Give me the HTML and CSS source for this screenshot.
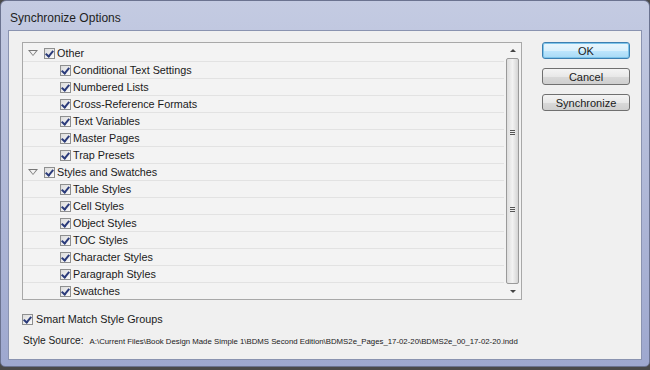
FILE: index.html
```html
<!DOCTYPE html>
<html lang="en">
<head>
<meta charset="UTF-8">
<title>Synchronize Options</title>
<link rel="stylesheet" href="styles.css">
</head>
<body>
<div class="window">
    <div class="titlebar">Synchronize Options</div>
    <div class="client">
        <div class="main">
            <div class="listbox">
                <div class="rows">
                    <div class="row group"><span class="twist"></span><span class="cb"></span>Other</div>
                    <div class="row"><span class="cb"></span>Conditional Text Settings</div>
                    <div class="row"><span class="cb"></span>Numbered Lists</div>
                    <div class="row"><span class="cb"></span>Cross-Reference Formats</div>
                    <div class="row"><span class="cb"></span>Text Variables</div>
                    <div class="row"><span class="cb"></span>Master Pages</div>
                    <div class="row"><span class="cb"></span>Trap Presets</div>
                    <div class="row group"><span class="twist"></span><span class="cb"></span>Styles and Swatches</div>
                    <div class="row"><span class="cb"></span>Table Styles</div>
                    <div class="row"><span class="cb"></span>Cell Styles</div>
                    <div class="row"><span class="cb"></span>Object Styles</div>
                    <div class="row"><span class="cb"></span>TOC Styles</div>
                    <div class="row"><span class="cb"></span>Character Styles</div>
                    <div class="row"><span class="cb"></span>Paragraph Styles</div>
                    <div class="row last"><span class="cb"></span>Swatches</div>
                </div>
                <div class="scrollbar">
                    <span class="arrow up"></span>
                    <div class="thumb">
                        <span class="grip"></span>
                        <span class="grip"></span>
                    </div>
                    <span class="arrow down"></span>
                </div>
            </div>
            <div class="option"><span class="cb"></span>Smart Match Style Groups</div>
            <div class="source">
                <span class="label">Style Source:</span>
                <span class="path">A:\Current Files\Book Design Made Simple 1\BDMS Second Edition\BDMS2e_Pages_17-02-20\BDMS2e_00_17-02-20.indd</span>
            </div>
        </div>
        <div class="buttons">
            <button class="btn default">OK</button>
            <button class="btn">Cancel</button>
            <button class="btn">Synchronize</button>
        </div>
    </div>
</div>
</body>
</html>
```

FILE: styles.css
```css
body {
    margin: 0;
    background-color: #4a4a4a;
    font-family: "Liberation Sans", Arial, sans-serif;
    color: #1a1a1a;
}
.window {
    width: 650px;
    height: 367px;
    box-sizing: border-box;
    padding: 0 7px 6px 7px;
    background: linear-gradient(to bottom, #c4cbe2 0%, #b4bcd9 40%, #9ea8cf 100%);
    border: 1px solid #6b7390;
    border-radius: 6px 6px 5px 5px;
    display: flex;
    flex-direction: column;
}
.titlebar {
    height: 29px;
    line-height: 34px;
    padding-left: 2px;
    font-size: 12px;
    color: #1e1e1e;
}
.client {
    flex: 1;
    background-color: #f0f0f0;
    border: 1px solid #8a93b0;
    display: flex;
    padding: 11px 13px 0 13px;
}
.main {
    flex: 0 0 500px;
    min-width: 0;
}
.listbox {
    height: 256px;
    border: 1px solid #a8a8a8;
    background-color: #f3f3f3;
    display: flex;
}
.rows {
    flex: 1;
    padding-top: 2px;
}
.row {
    height: 16px;
    border-bottom: 1px solid #e2e2e2;
    display: flex;
    align-items: center;
    padding-left: 37px;
    font-size: 10.8px;
}
.row.last {
    border-bottom: none;
}
.row.group {
    padding-left: 5px;
}
.twist {
    width: 0;
    height: 0;
    border-left: 5px solid transparent;
    border-right: 5px solid transparent;
    border-top: 6px solid #777;
    margin-right: 6px;
    position: relative;
}
.twist::after {
    content: '';
    position: absolute;
    left: -3px;
    top: -5px;
    border-left: 3px solid transparent;
    border-right: 3px solid transparent;
    border-top: 4px solid #f3f3f3;
}
.cb {
    width: 9px;
    height: 9px;
    border: 1px solid #8e8f8f;
    background: linear-gradient(135deg, #dcdcdc, #fafafa);
    margin-right: 2px;
    position: relative;
    flex-shrink: 0;
}
.cb::after {
    content: '';
    position: absolute;
    left: 2px;
    top: 0px;
    width: 3px;
    height: 6px;
    border-right: 2px solid #2b3b7a;
    border-bottom: 2px solid #2b3b7a;
    transform: rotate(40deg);
}
.scrollbar {
    width: 17px;
    display: flex;
    flex-direction: column;
    align-items: center;
    background-color: #f3f3f3;
}
.arrow {
    height: 15px;
    display: flex;
    align-items: center;
}
.arrow::before {
    content: '';
    border-left: 3px solid transparent;
    border-right: 3px solid transparent;
}
.arrow.up::before {
    border-bottom: 3px solid #444;
}
.arrow.down::before {
    border-top: 3px solid #444;
}
.thumb {
    flex: 1;
    width: 11px;
    border: 1px solid #9a9a9a;
    border-radius: 2px;
    background: linear-gradient(to right, #dedede, #f2f2f2 50%, #d4d4d4);
    display: flex;
    flex-direction: column;
    justify-content: space-evenly;
    align-items: center;
}
.grip {
    width: 5px;
    height: 5px;
    background: repeating-linear-gradient(to bottom, #555 0, #555 1px, transparent 1px, transparent 2px);
}
.option {
    display: flex;
    align-items: center;
    margin-top: 12px;
    font-size: 10.8px;
    height: 14px;
}
.option .cb {
    margin-right: 3px;
}
.source {
    display: flex;
    align-items: baseline;
    margin-top: 9px;
    padding-left: 1px;
    white-space: nowrap;
}
.label {
    font-size: 10.2px;
    margin-right: 6px;
}
.path {
    font-size: 7.8px;
}
.buttons {
    margin-left: 20px;
    display: flex;
    flex-direction: column;
    gap: 9px;
}
.btn {
    width: 88px;
    height: 17px;
    padding: 0;
    font-family: "Liberation Sans", Arial, sans-serif;
    font-size: 11px;
    color: #1a1a1a;
    border: 1px solid #707070;
    border-radius: 3px;
    background: linear-gradient(to bottom, #f4f4f4 0%, #e8e8e8 50%, #d9d9d9 51%, #cfcfcf 100%);
}
.btn.default {
    border-color: #3c7fb1;
    background: linear-gradient(to bottom, #eaf6fd 0%, #d9f0fc 50%, #bee6fd 51%, #a7d9f5 100%);
    box-shadow: inset 0 0 0 1px #7ec5ea;
}
```
